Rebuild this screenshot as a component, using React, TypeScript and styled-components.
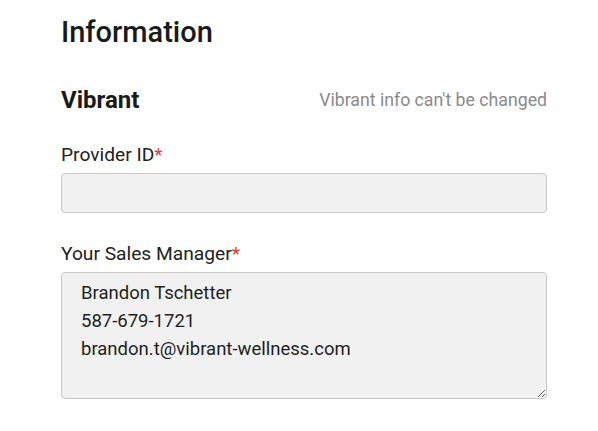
import styled, { createGlobalStyle } from "styled-components";

const GlobalStyle = createGlobalStyle`
  body {
    margin: 0;
    background: #fff;
    font-family: Roboto, "Liberation Sans", sans-serif;
    color: #1f1f1f;
  }
`;

const Page = styled.div`
  width: 486px;
  padding: 14px 0 0 61px;
  display: flex;
  flex-direction: column;
`;

const Title = styled.h1`
  margin: 0;
  font-size: 29px;
  font-weight: 500;
  line-height: 36px;
  color: #1a1a1a;
`;

const SectionHeader = styled.div`
  display: flex;
  justify-content: space-between;
  align-items: center;
  margin-top: 35px;
`;

const SectionTitle = styled.h2`
  margin: 0;
  font-size: 24px;
  font-weight: 700;
  line-height: 30px;
  color: #1a1a1a;
`;

const Hint = styled.span`
  font-size: 17.7px;
  color: #8a8a8a;
`;

const Field = styled.div`
  display: flex;
  flex-direction: column;
  gap: 6px;
  margin-top: ${({ $top }: { $top: number }) => $top}px;
`;

const Label = styled.label`
  font-size: 19.2px;
  line-height: 24px;
  color: #222;
`;

const Required = styled.span`
  color: #e53935;
`;

const Input = styled.input`
  box-sizing: border-box;
  width: 100%;
  height: 40px;
  margin: 0;
  background: #f1f1f1;
  border: 1px solid #c8c8c8;
  border-radius: 4px;
  padding: 0 19px;
  font: inherit;
  font-size: 18.5px;
`;

const TextArea = styled.textarea`
  box-sizing: border-box;
  width: 100%;
  height: 127px;
  margin: 0;
  background: #f1f1f1;
  border: 1px solid #c8c8c8;
  border-radius: 4px;
  padding: 6px 19px;
  font-family: Roboto, "Liberation Sans", sans-serif;
  font-size: 18.5px;
  line-height: 28px;
  color: #1f1f1f;
  resize: vertical;
  display: block;
`;

export default function App() {
  return (
    <>
      <GlobalStyle />
      <Page>
        <Title>Information</Title>
        <SectionHeader>
          <SectionTitle>Vibrant</SectionTitle>
          <Hint>Vibrant info can't be changed</Hint>
        </SectionHeader>
        <Field $top={28}>
          <Label>
            Provider ID<Required>*</Required>
          </Label>
          <Input readOnly />
        </Field>
        <Field $top={29}>
          <Label>
            Your Sales Manager<Required>*</Required>
          </Label>
          <TextArea
            readOnly
            defaultValue={"Brandon Tschetter\n587-679-1721\nbrandon.t@vibrant-wellness.com"}
          />
        </Field>
      </Page>
    </>
  );
}
